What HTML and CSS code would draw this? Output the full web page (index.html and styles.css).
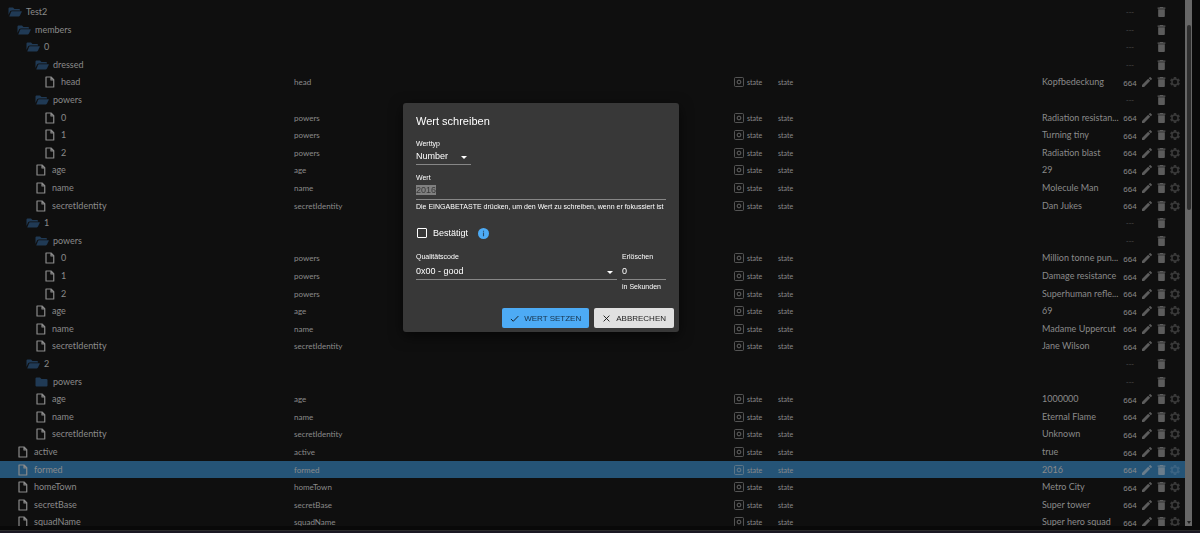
FILE: index.html
```html
<!DOCTYPE html>
<html lang="de">
<head>
<meta charset="utf-8">
<title>Objekte</title>
<link rel="stylesheet" href="styles.css">
</head>
<body>
<svg class="sprite" aria-hidden="true">
  <symbol id="i-open" viewBox="0 0 28 20"><path d="M1 16V3q0-2 2-2h7l3 3h9q2 0 2 2v1H8q-3 0-4 2z"/><path d="M8 8.500h19q1 0 .6 1L24 17q-1 2-3 2H2.500L6 10q.6-1.500 2-1.500z"/></symbol>
  <symbol id="i-folder" viewBox="0 0 28 20"><path d="M1 17V3q0-2 2-2h7l3 3h10q2 0 2 2v11q0 2-2 2H3q-2 0-2-2z"/></symbol>
  <symbol id="i-file" viewBox="0 0 20 24"><path fill="none" stroke="currentColor" stroke-width="2.400" stroke-linejoin="round" d="M2 2h10l5.500 5.500V22H2zM12 2v6h5.500"/></symbol>
  <symbol id="i-edit" viewBox="3 3 18 18"><path d="M3 17.250V21h3.750L17.810 9.940l-3.750-3.750zM20.710 7.040a1 1 0 0 0 0-1.410l-2.340-2.340a1 1 0 0 0-1.410 0l-1.830 1.830 3.750 3.750z"/></symbol>
  <symbol id="i-trash" viewBox="5 3 14 18"><path d="M6 19c0 1.100.9 2 2 2h8c1.100 0 2-.9 2-2V7H6zM19 4h-3.500l-1-1h-5l-1 1H5v2h14z"/></symbol>
  <symbol id="i-gear" viewBox="0 0 24 24"><path fill-rule="evenodd" d="M19.430 12.980c.04-.32.07-.64.07-.98s-.03-.66-.07-.98l2.110-1.650c.19-.15.24-.42.12-.64l-2-3.460c-.12-.22-.39-.3-.61-.22l-2.490 1c-.52-.4-1.080-.73-1.690-.98l-.38-2.650A.49.490 0 0 0 14 2h-4c-.25 0-.46.18-.49.420l-.38 2.650c-.61.250-1.170.590-1.690.980l-2.490-1c-.23-.09-.49 0-.61.220l-2 3.460c-.13.220-.07.490.12.640l2.110 1.650c-.04.320-.07.650-.07.980s.03.660.07.980l-2.110 1.650c-.19.150-.24.420-.12.640l2 3.460c.12.220.39.300.61.220l2.490-1c.52.400 1.080.730 1.690.980l.38 2.650c.03.240.24.420.49.420h4c.25 0 .46-.18.49-.42l.38-2.650c.61-.25 1.170-.59 1.690-.98l2.490 1c.23.090.49 0 .61-.22l2-3.460c.12-.22.07-.49-.12-.64zM12 16.500a4.500 4.500 0 1 1 0-9 4.500 4.500 0 0 1 0 9z"/></symbol>
  <symbol id="i-state" viewBox="0 0 20 20"><rect x="1" y="1" width="18" height="18" rx="2" fill="none" stroke="currentColor" stroke-width="1.600"/><circle cx="10" cy="10" r="3.800" fill="none" stroke="currentColor" stroke-width="2"/></symbol>
</svg>

<main class="page">
  <div class="pane">
    <table class="objects">
      <colgroup><col class="c-id"><col class="c-name"><col class="c-type"><col class="c-role"><col class="c-value"><col class="c-actions"></colgroup>
      <tbody id="rows"></tbody>
    </table>
  </div>
  <div class="track" aria-hidden="true"><div class="thumb"></div><div class="arrow"></div></div>
</main>
<footer class="edge"></footer>

<div class="overlay">
  <form class="dialog" role="dialog" aria-labelledby="title">
    <h2 class="title" id="title">Wert schreiben</h2>
    <div class="field type">
      <label for="type">Werttyp</label>
      <div class="drop"><select id="type"><option>Number</option></select></div>
    </div>
    <div class="field value">
      <label for="value">Wert</label>
      <div class="entry"><input id="value" type="text" value="2016"></div>
      <p class="help">Die EINGABETASTE drücken, um den Wert zu schreiben, wenn er fokussiert ist</p>
    </div>
    <div class="ack">
      <input id="ack" type="checkbox"><label for="ack">Bestätigt</label>
      <svg class="info" viewBox="0 0 24 24" role="img" aria-label="Info"><circle cx="12" cy="12" r="12" fill="#4dabf5"/><path fill="#2b4a66" d="M10.800 6h2.400v2.400h-2.400zM10.800 10h2.400v8h-2.400z"/></svg>
    </div>
    <div class="pair">
      <div class="field">
        <label for="quality">Qualitätscode</label>
        <div class="drop"><select id="quality"><option>0x00 - good</option></select></div>
      </div>
      <div class="field expire">
        <label for="expire">Erlöschen</label>
        <input id="expire" type="text" value="0">
        <p class="help">in Sekunden</p>
      </div>
    </div>
    <div class="buttons">
      <button class="btn primary" type="button"><svg viewBox="0 0 10 10"><path d="M1 5.500l2.600 2.600L9.300 2.300"/></svg>Wert setzen</button>
      <button class="btn" type="button"><svg viewBox="0 0 10 10"><path d="M1.800 1.800l6.400 6.400M8.200 1.800L1.800 8.200"/></svg>Abbrechen</button>
    </div>
  </form>
</div>
<script src="script.js"></script>
</body>
</html>
```
FILE: styles.css
```css
* { box-sizing: border-box; }
body {
  margin: 0;
  height: 100vh;
  overflow: hidden;
  display: flex;
  flex-direction: column;
  background: #090909;
  color: #8a8a8a;
  font-family: Lato, "Open Sans", sans-serif;
  font-size: 9px;
}
.sprite { display: none; }
svg { display: block; fill: currentColor; }
button { font: inherit; color: inherit; background: none; border: 0; padding: 0; }

.page { flex: 1; min-height: 0; display: flex; padding-right: 8px; margin-bottom: 4px; }
.pane { flex: 1; overflow: hidden; padding-top: 3px; background: #0f0f0f; }
.edge { height: 3px; background: #1b1823; border-top: 1px solid #2c2c2c; }

.track { width: 7px; background: #676767; display: flex; flex-direction: column; justify-content: space-between; align-items: center; padding: 25px 0 1px; }
.thumb { width: 4px; height: 185px; background: #2f2f2f; border-radius: 2px; }
.arrow { border: 2px solid transparent; border-top: 3px solid #222; border-bottom: 0; margin-bottom: 1px; }

.objects { width: 100%; table-layout: fixed; border-collapse: collapse; }
.c-name { width: 440px; }
.c-type { width: 44px; }
.c-role { width: 264px; }
.c-value { width: 81px; }
.c-actions { width: 62px; }
.objects tr { height: 18px; }
.objects tr:nth-child(5n+2), .objects tr:nth-child(5n+4) { height: 17px; }
.objects td { padding: 0; line-height: 16px; white-space: nowrap; }
.objects .selected { background: #255477; }
.node { display: flex; align-items: center; }
.node svg { flex: none; }
.folder { padding-left: 8px; gap: 4px; }
.folder svg { width: 14px; height: 10px; color: #203a55; }
.file { padding-left: 9px; gap: 6px; }
.file svg { width: 10px; height: 12px; }
.l1 { margin-left: 9px; }
.l2 { margin-left: 18px; }
.l3 { margin-left: 27px; }
.l4 { margin-left: 36px; }
.objects .small { font-size: 8px; }
.objects .tiny { font-size: 7px; }
.kind { display: flex; align-items: center; gap: 3px; }
.kind svg { width: 10px; height: 10px; color: #666; }
.actions { display: grid; grid-template-columns: 14px 4px 12px 4px 9px 3px 12px; align-items: center; justify-items: center; color: #5c5c5c; font-family: "Liberation Sans", Arial, sans-serif; }
.rights { grid-column: 1; font-size: 8px; line-height: 14px; padding-top: 3px; color: #8a8a8a; }
.rights.none { padding: 0; color: #4a4a4a; }
.edit { grid-column: 3; }
.edit svg { width: 10px; height: 10px; }
.del { grid-column: 5; }
.del svg { width: 9px; height: 10px; }
.cfg { grid-column: 7; color: #383838; }
.cfg svg { width: 12px; height: 12px; }
.selected .kind svg, .selected .actions { color: #6a7d8c; }
.selected .cfg { color: #3b6382; }

.overlay { position: fixed; inset: 0; display: flex; align-items: center; justify-content: center; padding: 0 118px 98px 0; }
.dialog {
  width: 276px;
  padding: 11px 5px 4px 13px;
  background: #383838;
  color: #fff;
  border-radius: 3px;
  box-shadow: 0 4px 14px rgba(0, 0, 0, .6);
  font-family: "Liberation Sans", Arial, sans-serif;
  font-size: 9px;
}
.dialog label, .help { font-size: 7px; line-height: 8px; display: block; margin: 0; white-space: nowrap; }
.title { margin: 0; font-size: 11px; font-weight: 400; line-height: 14px; }
.field { display: flex; flex-direction: column; }
.type { width: 55px; margin-top: 12px; }
.value { margin: 9px 8px 0 0; }
.drop { position: relative; }
.drop::after { content: ""; position: absolute; right: 4px; bottom: 6px; border: 3px solid transparent; border-top-color: #fff; border-bottom: 0; }
.dialog select, .dialog input[type=text] {
  appearance: none; display: block; width: 100%; height: 17px; margin: 0; padding: 0 0 1px;
  border: 0; border-bottom: 1px solid #868686; border-radius: 0; background: none;
  color: #fff; font: inherit; outline: 0;
}
.dialog .entry input { height: 18px; color: #383838; }
.entry input::selection { background: #808080; color: #383838; }
.value .help { margin-top: 3px; }
.ack { display: flex; align-items: center; margin-top: 16px; }
.ack input { appearance: none; width: 10px; height: 10px; margin: 0 6px 0 1px; border: 1px solid #fff; border-radius: 1px; outline: 0; }
.dialog .ack label { font-size: 9px; line-height: 12px; }
.info { width: 11px; height: 11px; margin-left: 10px; }
.pair { display: grid; grid-template-columns: 1fr 44px; gap: 5px; margin: 14px 8px 0 0; }
.dialog .pair select, .dialog .pair input { height: 19px; padding: 2px 0 1px; }
.expire .help { margin-top: 3px; }
.buttons { display: flex; justify-content: flex-end; gap: 5px; margin-top: 17px; }
.btn { display: flex; align-items: center; gap: 5px; height: 20px; padding: 0 8px; border-radius: 2px; background: #e0e0e0; color: #222; font-size: 8px; text-transform: uppercase; }
.btn.primary { background: #4dabf5; color: #173249; }
.btn svg { width: 9px; height: 9px; fill: none; stroke: #111; stroke-width: 1px; }
```
FILE: script.js
```js
// level, id, name (files only), value (files only)
const rows = [
  [0, "Test2"], [1, "members"], [2, "0"], [3, "dressed"],
  [4, "head", "head", "Kopfbedeckung"],
  [3, "powers"],
  [4, "0", "powers", "Radiation resistan..."],
  [4, "1", "powers", "Turning tiny"],
  [4, "2", "powers", "Radiation blast"],
  [3, "age", "age", "29"],
  [3, "name", "name", "Molecule Man"],
  [3, "secretIdentity", "secretIdentity", "Dan Jukes"],
  [2, "1"], [3, "powers"],
  [4, "0", "powers", "Million tonne pun..."],
  [4, "1", "powers", "Damage resistance"],
  [4, "2", "powers", "Superhuman refle..."],
  [3, "age", "age", "69"],
  [3, "name", "name", "Madame Uppercut"],
  [3, "secretIdentity", "secretIdentity", "Jane Wilson"],
  [2, "2"], [3, "powers", null, null, "folder"],
  [3, "age", "age", "1000000"],
  [3, "name", "name", "Eternal Flame"],
  [3, "secretIdentity", "secretIdentity", "Unknown"],
  [1, "active", "active", "true"],
  [1, "formed", "formed", "2016"],
  [1, "homeTown", "homeTown", "Metro City"],
  [1, "secretBase", "secretBase", "Super tower"],
  [1, "squadName", "squadName", "Super hero squad"],
];
const icon = (id) => `<svg><use href="#i-${id}"/></svg>`;
const button = (cls, id, label) => `<button class="${cls}" aria-label="${label}">${icon(id)}</button>`;
document.getElementById("rows").innerHTML = rows.map(([level, id, name, value, closed]) => {
  const del = button("del", "trash", "Löschen");
  if (!name) {
    return `<tr><td><div class="node folder l${level}">${icon(closed || "open")}<span>${id}</span></div></td>
      <td></td><td></td><td></td><td></td>
      <td><div class="actions"><span class="rights none">---</span>${del}</div></td></tr>`;
  }
  return `<tr class="${id === "formed" ? "selected" : ""}">
    <td><div class="node file l${level}">${icon("file")}<span>${id}</span></div></td>
    <td class="small">${name}</td>
    <td class="tiny"><div class="kind">${icon("state")}<span>state</span></div></td>
    <td class="tiny">state</td>
    <td class="val">${value}</td>
    <td><div class="actions"><span class="rights">664</span>${button("edit", "edit", "Bearbeiten")}${del}${button("cfg", "gear", "Einstellungen")}</div></td></tr>`;
}).join("");
const field = document.getElementById("value");
field.focus();
field.select();
```
